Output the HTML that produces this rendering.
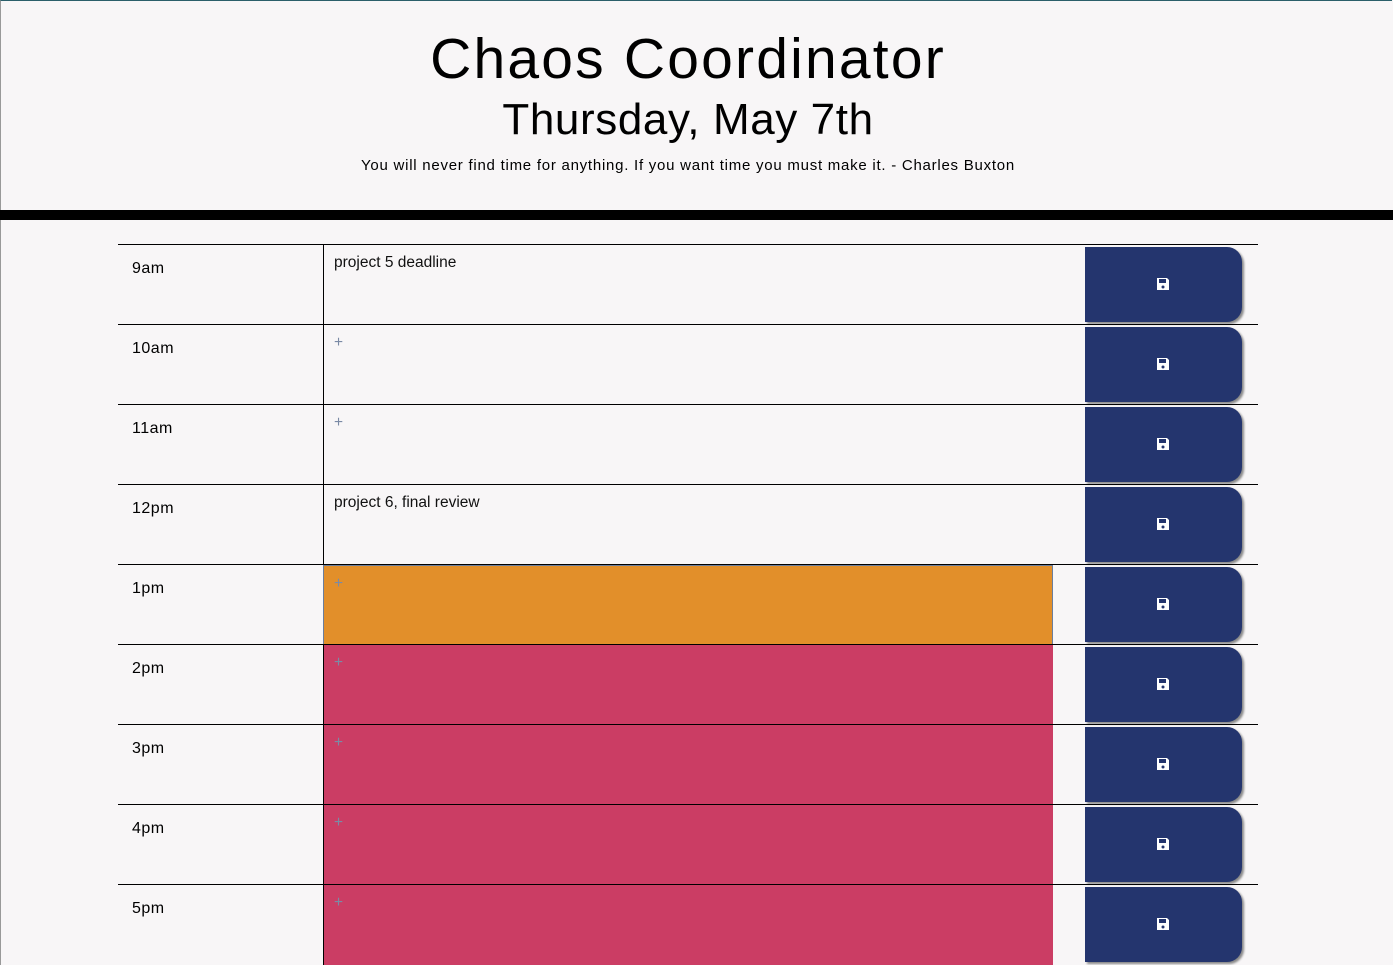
<!DOCTYPE html>
<html><head><style>
body{margin:0;width:1393px;height:965px;overflow:hidden;background:#f8f6f7;font-family:"Liberation Sans",sans-serif;}
.frame{position:absolute;left:0;top:0;width:1392px;height:965px;border-left:1px solid #999;border-top:1px solid #2b5f6a;box-sizing:border-box;}
h1{position:absolute;top:26px;left:0;width:1376px;text-align:center;margin:0;font-weight:normal;font-size:57px;letter-spacing:2.2px;color:#000;}
h2{position:absolute;top:95px;left:0;width:1376px;text-align:center;margin:0;font-weight:normal;font-size:44px;letter-spacing:0.6px;}
.q{position:absolute;top:157px;left:0;width:1376px;text-align:center;font-size:15px;letter-spacing:0.75px;}
.bar{position:absolute;top:210px;left:0;width:1393px;height:10px;background:#000;}
.row{position:absolute;left:118px;width:1140px;height:80px;border-top:1px solid #000;}
.t{position:absolute;left:14px;top:15px;font-size:16px;letter-spacing:0.5px;}
.ta{position:absolute;left:205px;top:0;height:80px;width:730px;border-left:1px solid #000;padding:9px 10px;box-sizing:border-box;font-size:15.5px;color:#111;}
.ta.p{color:#7a8aa5;}
.o{background:#e28f2a;border:1px solid #6b7e9c;}
.r{background:#cb3d64;}
.b{position:absolute;left:967px;top:2px;width:157px;height:75px;background:#24356e;border-radius:0 15px 15px 0;box-shadow:2px 2px 2px #888;}
.b svg{position:absolute;left:71px;top:30px;}
</style></head><body>
<div class="frame"></div>
<h1>Chaos Coordinator</h1>
<h2>Thursday, May 7th</h2>
<div class="q">You will never find time for anything. If you want time you must make it. - Charles Buxton</div>
<div class="bar"></div>

<div class="row" style="top:244px"><div class="t">9am</div><div class="ta">project 5 deadline</div><div class="b"><svg width="14" height="14" viewBox="0 0 14 14"><path d="M1 1h10l2 2v10H1z" fill="#fff"/><rect x="3" y="2" width="7" height="4" fill="#24356e"/><circle cx="7" cy="10" r="1.5" fill="#24356e"/></svg></div></div>
<div class="row" style="top:324px"><div class="t">10am</div><div class="ta p">+</div><div class="b"><svg width="14" height="14" viewBox="0 0 14 14"><path d="M1 1h10l2 2v10H1z" fill="#fff"/><rect x="3" y="2" width="7" height="4" fill="#24356e"/><circle cx="7" cy="10" r="1.5" fill="#24356e"/></svg></div></div>
<div class="row" style="top:404px"><div class="t">11am</div><div class="ta p">+</div><div class="b"><svg width="14" height="14" viewBox="0 0 14 14"><path d="M1 1h10l2 2v10H1z" fill="#fff"/><rect x="3" y="2" width="7" height="4" fill="#24356e"/><circle cx="7" cy="10" r="1.5" fill="#24356e"/></svg></div></div>
<div class="row" style="top:484px"><div class="t">12pm</div><div class="ta">project 6, final review</div><div class="b"><svg width="14" height="14" viewBox="0 0 14 14"><path d="M1 1h10l2 2v10H1z" fill="#fff"/><rect x="3" y="2" width="7" height="4" fill="#24356e"/><circle cx="7" cy="10" r="1.5" fill="#24356e"/></svg></div></div>
<div class="row" style="top:564px"><div class="t">1pm</div><div class="ta p o">+</div><div class="b"><svg width="14" height="14" viewBox="0 0 14 14"><path d="M1 1h10l2 2v10H1z" fill="#fff"/><rect x="3" y="2" width="7" height="4" fill="#24356e"/><circle cx="7" cy="10" r="1.5" fill="#24356e"/></svg></div></div>
<div class="row" style="top:644px"><div class="t">2pm</div><div class="ta p r">+</div><div class="b"><svg width="14" height="14" viewBox="0 0 14 14"><path d="M1 1h10l2 2v10H1z" fill="#fff"/><rect x="3" y="2" width="7" height="4" fill="#24356e"/><circle cx="7" cy="10" r="1.5" fill="#24356e"/></svg></div></div>
<div class="row" style="top:724px"><div class="t">3pm</div><div class="ta p r">+</div><div class="b"><svg width="14" height="14" viewBox="0 0 14 14"><path d="M1 1h10l2 2v10H1z" fill="#fff"/><rect x="3" y="2" width="7" height="4" fill="#24356e"/><circle cx="7" cy="10" r="1.5" fill="#24356e"/></svg></div></div>
<div class="row" style="top:804px"><div class="t">4pm</div><div class="ta p r">+</div><div class="b"><svg width="14" height="14" viewBox="0 0 14 14"><path d="M1 1h10l2 2v10H1z" fill="#fff"/><rect x="3" y="2" width="7" height="4" fill="#24356e"/><circle cx="7" cy="10" r="1.5" fill="#24356e"/></svg></div></div>
<div class="row" style="top:884px"><div class="t">5pm</div><div class="ta p r">+</div><div class="b"><svg width="14" height="14" viewBox="0 0 14 14"><path d="M1 1h10l2 2v10H1z" fill="#fff"/><rect x="3" y="2" width="7" height="4" fill="#24356e"/><circle cx="7" cy="10" r="1.5" fill="#24356e"/></svg></div></div>
</body></html>
